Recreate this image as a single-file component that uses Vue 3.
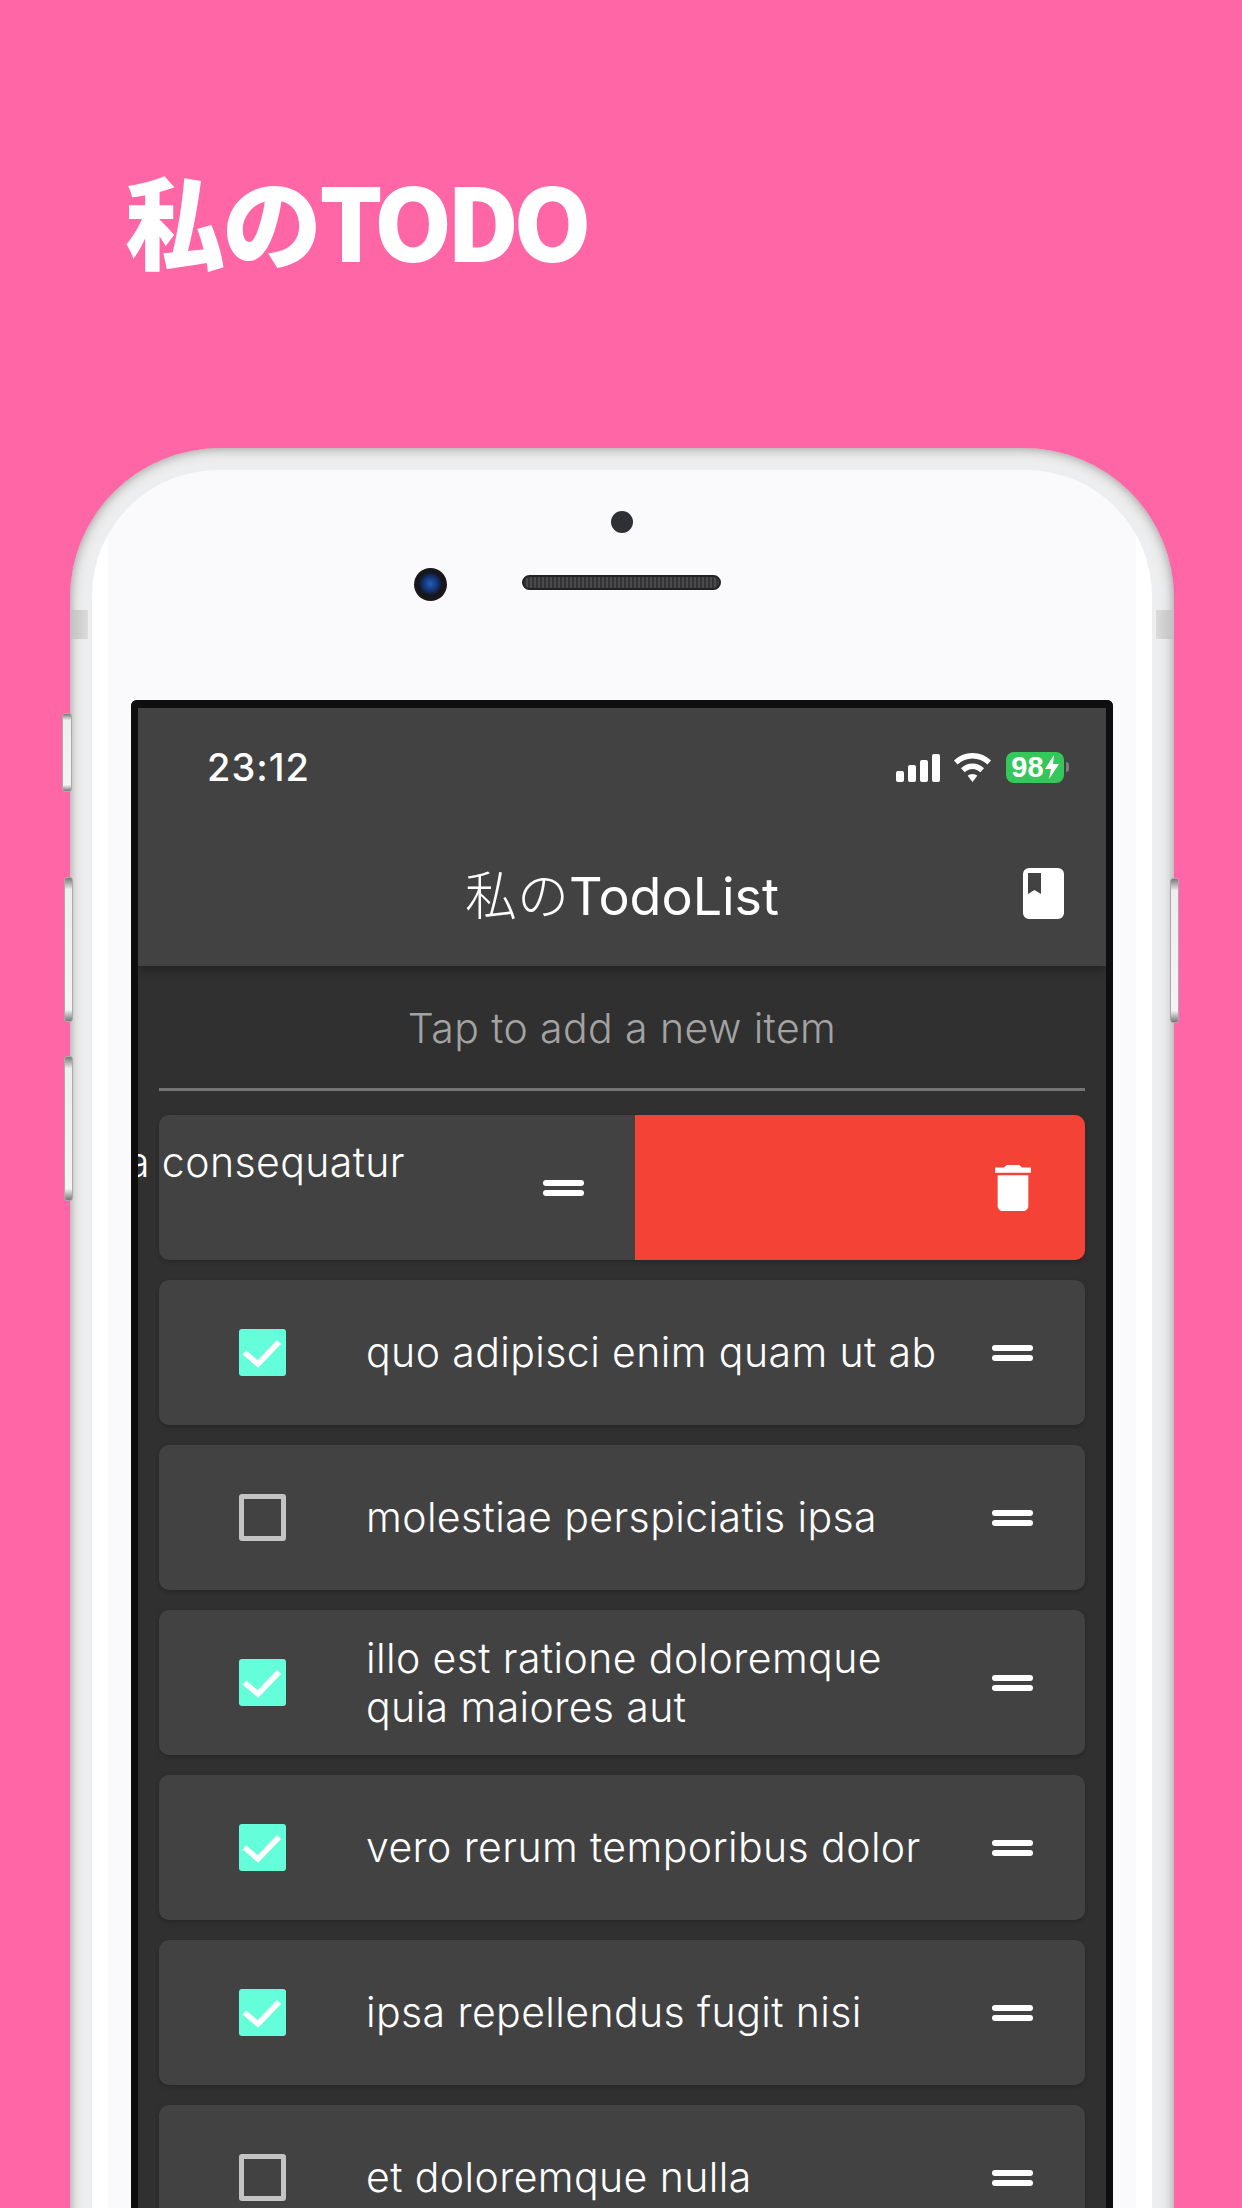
<script setup>
const items = [
  { id: 2, text: 'quo adipisci enim quam ut ab', done: true },
  { id: 3, text: 'molestiae perspiciatis ipsa', done: false },
  { id: 4, text: 'illo est ratione doloremque quia maiores aut', done: true },
  { id: 5, text: 'vero rerum temporibus dolor', done: true },
  { id: 6, text: 'ipsa repellendus fugit nisi', done: true },
  { id: 7, text: 'et doloremque nulla', done: false },
]
</script>

<template>
  <div class="page">
    <h1 class="headline">私の<span class="headline-latin">TODO</span></h1>

    <div class="phone">
      <i class="side mute"></i>
      <i class="side volup"></i>
      <i class="side voldown"></i>
      <i class="side power"></i>
      <i class="antenna left"></i>
      <i class="antenna right"></i>

      <div class="bezel">
        <div class="front">
          <i class="sensor"></i>
          <i class="camera"></i>
          <i class="speaker"></i>

          <div class="screen">
            <header class="appbar">
              <div class="status">
                <span class="time">23:12</span>
                <div class="status-icons">
                  <div class="signal"><i></i><i></i><i></i><i></i></div>
                  <svg class="wifi" viewBox="0 0 39 29">
                    <path d="M19.5 0C12 0 5.5 3 1 7.5L4.6 11.5C8.4 7.8 13.6 5.4 19.5 5.4S30.6 7.8 34.4 11.5L38 7.5C33.5 3 27 0 19.5 0Z" fill="#fff" />
                    <path d="M19.5 10.5C15 10.5 11 12.3 8 15.2L11.7 19.2C13.8 17.3 16.5 16 19.5 16S25.2 17.3 27.3 19.2L31 15.2C28 12.3 24 10.5 19.5 10.5Z" fill="#fff" />
                    <path d="M19.5 21C17.6 21 16 21.7 14.7 22.8L19.5 29L24.3 22.8C23 21.7 21.4 21 19.5 21Z" fill="#fff" />
                  </svg>
                  <div class="battery">
                    <span>98</span>
                    <svg class="bolt" viewBox="0 0 14 24"><path d="M9 0L0 14H6L4 24L14 9H8L9 0Z" fill="#fff" /></svg>
                  </div>
                  <i class="battery-nub"></i>
                </div>
              </div>
              <div class="toolbar">
                <span class="title"><span class="title-ja">私の</span>TodoList</span>
                <svg class="book" viewBox="0 0 41 51">
                  <path fill-rule="evenodd" d="M6 0H35A6 6 0 0 1 41 6V45A6 6 0 0 1 35 51H6A6 6 0 0 1 0 45V6A6 6 0 0 1 6 0ZM5 5V26L11.5 22L18 26V5Z" fill="#fff" />
                </svg>
              </div>
            </header>

            <div class="content">
              <div class="hint">Tap to add a new item</div>
              <div class="divider"></div>

              <div class="row swiped">
                <div class="swiped-main">
                  <span class="swiped-text">a consequatur</span>
                  <div class="handle"><i></i><i></i></div>
                </div>
                <div class="swiped-delete">
                  <svg class="trash" viewBox="5 3 14 18">
                    <path d="M6 19c0 1.1.9 2 2 2h8c1.100 0 2-.9 2-2V7H6v12zM19 4h-3.500l-1-1h-5l-1 1H5v2h14V4z" fill="#fff" />
                  </svg>
                </div>
              </div>

              <div v-for="item in items" :key="item.id" class="row">
                <div class="check-cell">
                  <div class="check" :class="{ on: item.done }">
                    <svg v-if="item.done" viewBox="0 0 47 47">
                      <path d="M5.500 23.500L19 35L40 13" fill="none" stroke="#fff" stroke-width="5.500" />
                    </svg>
                  </div>
                </div>
                <div class="text">{{ item.text }}</div>
                <div class="handle"><i></i><i></i></div>
              </div>
            </div>
          </div>
        </div>
      </div>
    </div>
  </div>
</template>

<style scoped>
.page {
  width: 1242px;
  height: 2208px;
  overflow: hidden;
  background: #ff66a5;
  font-family: Inter, "Noto Sans CJK JP", sans-serif;
}

.headline {
  margin: 0;
  padding: 154px 0 0 125px;
  height: 448px;
  box-sizing: border-box;
  font-family: "Noto Sans CJK JP", sans-serif;
  font-size: 100px;
  line-height: 130px;
  font-weight: 900;
  letter-spacing: -3px;
  color: #fff;
}

.headline-latin {
  letter-spacing: -6px;
}

.phone {
  position: relative;
  width: 1104px;
  height: 1900px;
  margin-left: 70px;
  box-sizing: border-box;
  padding: 14px 16px 0;
  background: #ededed;
  border-radius: 150px 150px 0 0;
  box-shadow: inset 0 0 12px #909090;
}

.side {
  position: absolute;
  display: block;
  box-sizing: border-box;
  background: linear-gradient(#777 0, #eee 8%, #f4f4f4 92%, #777 100%);
  border: 1px solid #aaa;
  border-radius: 3px;
}
.mute { left: -8px; top: 265px; width: 10px; height: 79px; }
.volup { left: -6px; top: 429px; width: 9px; height: 145px; }
.voldown { left: -6px; top: 608px; width: 9px; height: 145px; }
.power { right: -5px; top: 430px; width: 9px; height: 145px; }

.antenna {
  position: absolute;
  display: block;
  top: 162px;
  width: 18px;
  height: 29px;
}
.antenna.left { left: 0; background: linear-gradient(to right, #c0c0c0, #dcdcdc); }
.antenna.right { right: 0; background: linear-gradient(to left, #c0c0c0, #dcdcdc); }

.bezel {
  height: 100%;
  box-sizing: border-box;
  padding: 8px 6px 0;
  background: #eceef0;
  border-radius: 134px 134px 0 0;
}

.front {
  position: relative;
  height: 100%;
  box-sizing: border-box;
  padding: 230px 0 0 39px;
  background: linear-gradient(to right, #fff 16px, #fafafc 16px, #fafafc 1044px, #fff 1044px);
  border-radius: 126px 126px 0 0;
}

.sensor {
  position: absolute;
  left: 519px;
  top: 41px;
  width: 22px;
  height: 22px;
  border-radius: 50%;
  background: #2f3033;
}

.camera {
  position: absolute;
  left: 322px;
  top: 98px;
  width: 33px;
  height: 33px;
  border-radius: 50%;
  background: radial-gradient(circle at 50% 48%, #2a5cae 0, #123a86 26%, #15151a 50%, #1b1b1e 72%, #56565a 100%);
}

.speaker {
  position: absolute;
  left: 430px;
  top: 105px;
  width: 199px;
  height: 15px;
  box-sizing: border-box;
  border-radius: 8px;
  border: 2px solid #222;
  background: repeating-linear-gradient(to right, #333 0 2px, #4a4a4c 2px 4px);
}

.screen {
  width: 982px;
  height: 1700px;
  box-sizing: border-box;
  overflow: hidden;
  border: solid #0e0e0e;
  border-width: 8px 7px 0;
  border-radius: 6px 6px 0 0;
  background: #303030;
}

.appbar {
  position: relative;
  height: 258px;
  background: #424242;
  box-shadow: 0 4px 10px rgba(0, 0, 0, 0.3);
}

.status {
  display: flex;
  align-items: center;
  justify-content: space-between;
  height: 84px;
  box-sizing: border-box;
  padding: 34px 37px 0 69px;
}

.time {
  font-size: 38px;
  font-weight: 500;
  letter-spacing: 1px;
  color: #fff;
}

.status-icons {
  display: flex;
  align-items: center;
}

.signal {
  display: flex;
  align-items: flex-end;
  gap: 4px;
  height: 29px;
}
.signal i {
  display: block;
  width: 8px;
  border-radius: 2px;
  background: #fff;
}
.signal i:nth-child(1) { height: 11px; }
.signal i:nth-child(2) { height: 17px; }
.signal i:nth-child(3) { height: 22px; }
.signal i:nth-child(4) { height: 28px; }

.wifi {
  width: 39px;
  height: 29px;
  margin-left: 13px;
}

.battery {
  display: flex;
  align-items: center;
  justify-content: center;
  gap: 1px;
  width: 58px;
  height: 31px;
  margin-left: 14px;
  border-radius: 8px;
  background: #34c759;
  color: #fff;
  font-family: "Liberation Sans", sans-serif;
  font-size: 29px;
  font-weight: 700;
}

.bolt {
  width: 14px;
  height: 24px;
}

.battery-nub {
  display: block;
  width: 3px;
  height: 10px;
  margin-left: 2px;
  border-radius: 0 3px 3px 0;
  background: #7d7d7d;
}

.toolbar {
  position: relative;
  display: flex;
  justify-content: center;
  align-items: center;
  height: 174px;
  padding-top: 27px;
  box-sizing: border-box;
}

.title {
  font-size: 52px;
  font-weight: 400;
  color: #fff;
  white-space: nowrap;
}

.title-ja {
  font-weight: 200;
}

.book {
  position: absolute;
  left: 885px;
  top: 76px;
  width: 41px;
  height: 51px;
}

.content {
  padding: 0 21px;
}

.hint {
  height: 122px;
  line-height: 124px;
  text-align: center;
  font-size: 41px;
  font-weight: 300;
  letter-spacing: 0.4px;
  color: #a3a3a3;
}

.divider {
  height: 3px;
  margin-bottom: 24px;
  background: #757575;
}

.row {
  display: flex;
  align-items: center;
  height: 145px;
  margin-bottom: 20px;
  border-radius: 10px;
  background: #424242;
  box-shadow: 0 2px 4px rgba(0, 0, 0, 0.2);
}

.check-cell {
  flex: 0 0 207px;
  padding-left: 80px;
  box-sizing: border-box;
}

.check {
  width: 47px;
  height: 47px;
  box-sizing: border-box;
  border: 5px solid #c4c4c4;
  border-radius: 3px;
}
.check.on {
  border: 0;
  background: #64ffda;
}
.check svg {
  display: block;
  width: 47px;
  height: 47px;
}

.text {
  flex: 1;
  font-size: 41px;
  line-height: 49px;
  font-weight: 300;
  letter-spacing: 0.4px;
  color: #fff;
}

.handle {
  flex: 0 0 41px;
  margin: 0 52px 0 30px;
}
.handle i {
  display: block;
  height: 6px;
  border-radius: 3px;
  background: #fff;
}
.handle i + i {
  margin-top: 4px;
}

.swiped-main {
  display: flex;
  align-items: center;
  justify-content: space-between;
  flex: 0 0 476px;
  height: 100%;
}

.swiped-text {
  margin: -50px 0 0 -32px;
  font-size: 41px;
  line-height: 49px;
  font-weight: 300;
  letter-spacing: 0.4px;
  color: #fff;
  white-space: nowrap;
}

.swiped-main .handle {
  margin: 0 51px 0 0;
}

.swiped-delete {
  display: flex;
  align-items: center;
  justify-content: flex-end;
  flex: 1;
  height: 100%;
  padding-right: 54px;
  box-sizing: border-box;
  border-radius: 0 10px 10px 0;
  background: #f44336;
}

.trash {
  width: 36px;
  height: 46px;
}
</style>

<style>
html, body {
  margin: 0;
  background: #ff66a5;
}
</style>
